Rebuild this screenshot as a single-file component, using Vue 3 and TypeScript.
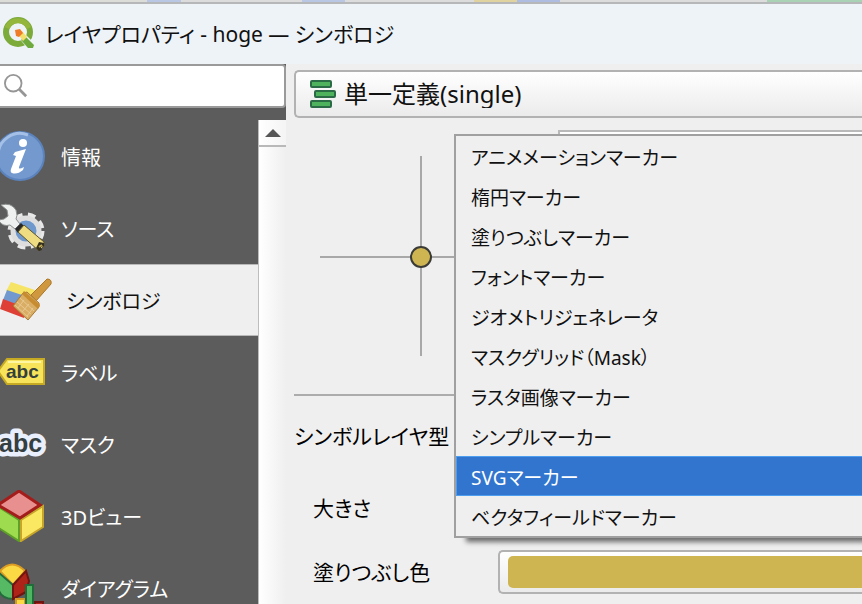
<script setup lang="ts">
import { ref } from 'vue'

interface Page {
  id: string
  label: string
}

const pages: Page[] = [
  { id: 'info', label: '情報' },
  { id: 'source', label: 'ソース' },
  { id: 'symbology', label: 'シンボロジ' },
  { id: 'labels', label: 'ラベル' },
  { id: 'mask', label: 'マスク' },
  { id: 'view3d', label: '3Dビュー' },
  { id: 'diagram', label: 'ダイアグラム' },
]

const layerTypes: string[] = [
  'アニメメーションマーカー',
  '楕円マーカー',
  '塗りつぶしマーカー',
  'フォントマーカー',
  'ジオメトリジェネレータ',
  'マスクグリッド（Mask）',
  'ラスタ画像マーカー',
  'シンプルマーカー',
  'SVGマーカー',
  'ベクタフィールドマーカー',
]

const currentPage = ref<string>('symbology')
const currentType = ref<string>('SVGマーカー')
const query = ref<string>('')
const renderer = ref<string>('single')
</script>

<template>
  <div class="window">
    <div class="canvas-edge" aria-hidden="true"></div>

    <header class="titlebar">
      <svg class="logo" viewBox="0 0 34 34" aria-hidden="true">
        <circle cx="16" cy="15" r="12" fill="none" stroke="#7cab3a" stroke-width="6" />
        <path d="M5 11a12 12 0 0 1 22 0" fill="none" stroke="#94b63c" stroke-width="5" />
        <path d="M15 19l5-5 13 13-6 6z" fill="#eef3f8" />
        <path d="M23 19l9 9-1 3h-5l-7-8z" fill="#6faa3c" />
        <path d="M16 17l4-3 5 6-4 4z" fill="#f3e06b" />
        <path d="M13 13l5-1 3 4-4 4-3-1z" fill="#ee7c28" />
      </svg>
      <h1 class="title">レイヤプロパティ - hoge — シンボロジ</h1>
    </header>

    <div class="body">
      <aside class="sidebar">
        <label class="search">
          <svg class="search-icon" viewBox="0 0 26 26" aria-hidden="true">
            <circle cx="10" cy="10" r="9" fill="none" stroke="#969696" stroke-width="2" />
            <path d="M16 16l8 8" stroke="#969696" stroke-width="3" />
          </svg>
          <input v-model="query" type="text" aria-label="search" />
        </label>

        <div class="list-area">
          <nav class="pages">
            <button
              v-for="page in pages"
              :key="page.id"
              type="button"
              class="page"
              :class="{ active: page.id === currentPage }"
              @click="currentPage = page.id"
            >
              <svg v-if="page.id === 'info'" class="page-icon" viewBox="0 0 52 52" aria-hidden="true">
                <circle cx="20" cy="26" r="24" fill="#7399ce" stroke="#5b83bd" stroke-width="2" />
                <path d="M-2 25A22 22 0 0 1 28 5" fill="none" stroke="#a5c0e6" stroke-width="3" />
                <circle cx="23" cy="13" r="4" fill="#fff" />
                <path d="M15 22l11-3-7 18q-1 3 5 0l-1 3q-6 5-11 3-2-1-1-4l5-13-3-1z" fill="#fff" />
              </svg>

              <svg v-else-if="page.id === 'source'" class="page-icon" viewBox="0 0 52 52" aria-hidden="true">
                <circle cx="26" cy="29" r="15" fill="none" stroke="#e8e8e8" stroke-width="7" stroke-dasharray="7 5" />
                <circle cx="26" cy="29" r="13" fill="#6f98cd" stroke="#dedede" stroke-width="5" />
                <path d="M1 3q10-3 15 5 2 6 0 9l4 5-5 5-5-4q-7 2-11-4V18l5-1 4-3-1-6z" fill="#eef1f0" stroke="#8b8f8d" />
                <path d="M15 27l6-6 3 3-6 7z" fill="#292929" />
                <path d="M18 30l6-7 20 17v4l-5 5z" fill="#eddc82" stroke="#5f542c" />
                <path d="M36 46l3-6 5 1v3l-3 1 1 3-3 1z" fill="#352f1d" />
                <path d="M39 45l3-2" stroke="#b9a650" stroke-width="2" />
              </svg>

              <svg v-else-if="page.id === 'symbology'" class="page-icon" viewBox="0 0 52 52" aria-hidden="true">
                <path d="M11 8l24 8-4 9-25-8z" fill="#f6e467" />
                <path d="M7 16l24 8-6 11-22-9z" fill="#7299cf" />
                <path d="M3 25l24 9-3 10-24-9z" fill="#df4035" />
                <path d="M31 21L47 5q5 0 4 5L36 27z" fill="#cf973e" stroke="#ac7726" />
                <path d="M23 19l4-1 12 11v4L28 46 13 32z" fill="#d9ad63" stroke="#a97930" />
                <path d="M20 24l14 13M17 28l14 12M15 31l13 12M18 34l6-8M22 38l7-8M27 42l6-8" stroke="#e8c992" stroke-width="1" />
                <path d="M24 17l16 14-2 4-16-15z" fill="#c88c30" />
              </svg>

              <svg v-else-if="page.id === 'labels'" class="page-icon" viewBox="0 0 52 52" aria-hidden="true">
                <path d="M-2 25L7 13h37v25H7z" fill="#f7e45b" stroke="#c6aa23" stroke-width="2" />
                <path d="M8 16h33" stroke="#fff6a1" stroke-width="2" />
                <text x="6" y="32" font-size="19" font-weight="700" fill="#35413c">abc</text>
              </svg>

              <svg v-else-if="page.id === 'mask'" class="page-icon" viewBox="0 0 52 52" aria-hidden="true">
                <text
                  x="-1"
                  y="34"
                  font-size="25"
                  font-weight="700"
                  fill="#353f42"
                  stroke="#e9effc"
                  stroke-width="9"
                  stroke-linejoin="round"
                  paint-order="stroke"
                >abc</text>
              </svg>

              <svg v-else-if="page.id === 'view3d'" class="page-icon" viewBox="0 0 52 52" aria-hidden="true">
                <path d="M-3 16l22 14v21L-3 37z" fill="#9edb4e" stroke="#5f9f2a" stroke-width="2" />
                <path d="M43 16L21 30v21l22-14z" fill="#fae862" stroke="#c6a529" stroke-width="2" />
                <path d="M19 1l21 14-20 13L-2 15z" fill="#e88f8f" stroke="#a31d1b" stroke-width="3" />
              </svg>

              <svg v-else class="page-icon" viewBox="0 0 52 52" aria-hidden="true">
                <path d="M0 9q12-13 25 0L13 23z" fill="#fbd944" stroke="#dc9c24" stroke-width="2" />
                <path d="M-2 10l15 13v14Q-2 36-2 23z" fill="#56b964" stroke="#246b3c" stroke-width="2" />
                <path d="M26 9l-13 14v14l13-7 3-11z" fill="#af2418" stroke="#701511" stroke-width="2" />
                <path d="M16 37h9v15h-9z" fill="#fbd944" stroke="#d69825" stroke-width="2" />
                <path d="M26 23h7v29h-7z" fill="#4eb561" stroke="#216a3a" stroke-width="2" />
                <path d="M35 40h8v12h-8z" fill="#af2418" stroke="#701511" stroke-width="2" />
              </svg>
              <span>{{ page.label }}</span>
            </button>
          </nav>
          <div class="scrollbar">
            <button type="button" class="scroll-up" aria-label="up">
              <svg viewBox="0 0 16 8" aria-hidden="true"><path d="M0 8l8-8 8 8z" fill="#565656" /></svg>
            </button>
          </div>
        </div>
      </aside>

      <main class="main">
        <div class="renderer">
          <svg class="renderer-icon" viewBox="0 0 26 28" aria-hidden="true">
            <g fill="#4fb35e" stroke="#2b6b45" stroke-width="2">
              <rect x="1" y="1" width="20" height="6" rx="1" />
              <rect x="5" y="11" width="20" height="6" rx="1" />
              <rect x="1" y="21" width="20" height="6" rx="1" />
            </g>
          </svg>
          <select v-model="renderer" aria-label="renderer">
            <option value="single">単一定義(single)</option>
          </select>
        </div>

        <section class="symbol">
          <svg class="preview" viewBox="0 0 200 200" aria-hidden="true">
            <path d="M0 101h200M101 0v200" stroke="#a8a8a8" stroke-width="2" />
            <circle cx="101" cy="101" r="10" fill="#ceb552" stroke="#3a3a36" stroke-width="2" />
          </svg>
          <div class="layer-tree"></div>
        </section>

        <form class="properties" @submit.prevent>
          <div class="row type-row"><span id="type-label">シンボルレイヤ型</span></div>
          <div class="row"><span>大きさ</span></div>
          <div class="row">
            <label for="fill-color">塗りつぶし色</label>
            <button id="fill-color" type="button" class="color-button">
              <span class="swatch"></span>
            </button>
          </div>
        </form>

        <div class="menu" role="listbox" aria-labelledby="type-label">
          <button
            v-for="name in layerTypes"
            :key="name"
            type="button"
            role="option"
            class="option"
            :class="{ selected: name === currentType }"
            :aria-selected="name === currentType"
            @click="currentType = name"
          >
            {{ name }}
          </button>
        </div>
      </main>
    </div>
  </div>
</template>

<style>
body {
  background: #efefef;
  overflow: hidden;
}
</style>

<style scoped>
.window {
  display: flex;
  flex-direction: column;
  height: 100vh;
  overflow: hidden;
  color: #111;
  background: #efefef;
  font-family: 'Noto Sans', 'Noto Sans CJK JP', sans-serif;
  font-feature-settings: 'palt';
  font-size: 20px;
  line-height: 28px;
}

.window *,
.window {
  box-sizing: border-box;
}

button,
select,
input {
  margin: 0;
  padding: 0;
  border: 0;
  color: inherit;
  font: inherit;
  font-feature-settings: inherit;
}

.canvas-edge {
  flex: none;
  height: 4px;
  border-bottom: 2px solid #b5b7b8;
  background: linear-gradient(90deg, #dcdcd8 0 17%, #bac7e4 17% 21%, #dcdcdc 21% 35%, #bac7e4 35% 40%, #dcdcdc 40% 55%, #e0d3a0 55% 60%, #afbce2 60% 65%, #dcdcdc 65% 89%, #a9d2b5 89%);
}

.titlebar {
  display: flex;
  flex: none;
  align-items: center;
  gap: 9px;
  height: 60px;
  padding-left: 2px;
  background: #eef3f8;
}

.logo {
  width: 34px;
  height: 34px;
}

.title {
  margin: 0;
  font-size: 21px;
  line-height: 28px;
  font-weight: 400;
}

.body {
  display: flex;
  flex: 1;
  min-height: 0;
}

.sidebar {
  display: flex;
  flex: none;
  flex-direction: column;
  width: 286px;
  background: #5c5c5c;
}

.search {
  display: flex;
  flex: none;
  align-items: center;
  gap: 8px;
  height: 44px;
  padding-left: 4px;
  border: 2px solid #9a9a9a;
  border-left: 0;
  border-radius: 0 4px 4px 0;
  background: #fff;
}

.search-icon {
  width: 24px;
  height: 24px;
}

.search input {
  flex: 1;
  min-width: 0;
  outline: 0;
  background: transparent;
}

.list-area {
  display: flex;
  flex: 1;
  min-height: 0;
  padding-top: 12px;
}

.pages {
  flex: 1;
  overflow: hidden;
}

.page {
  display: flex;
  align-items: center;
  gap: 9px;
  width: 100%;
  height: 72px;
  background: transparent;
  color: #fff;
  text-align: left;
}

.page span {
  padding-top: 3px;
}

.page.active {
  gap: 14px;
  border-top: 1px solid #b9b9b9;
  border-bottom: 1px solid #b9b9b9;
  background: #efefef;
  color: #111;
}

.page-icon {
  flex: none;
  width: 52px;
  height: 52px;
  font-family: 'Liberation Sans', sans-serif;
}

.scrollbar {
  flex: none;
  width: 28px;
  border-left: 1px solid #bdbdbd;
  background: linear-gradient(90deg, #fff, #efefef);
}

.scroll-up {
  display: flex;
  align-items: center;
  justify-content: center;
  width: 100%;
  height: 27px;
  border-bottom: 2px solid #b9b9b9;
  background: linear-gradient(90deg, #fff, #f4f4f4);
}

.scroll-up svg {
  width: 16px;
  height: 8px;
}

.main {
  position: relative;
  display: flex;
  flex: 1;
  flex-direction: column;
  min-width: 0;
  padding: 6px 0 0 8px;
}

.renderer {
  display: flex;
  flex: none;
  align-items: center;
  gap: 8px;
  height: 48px;
  padding-left: 14px;
  border: 2px solid #b2b2b2;
  border-right: 0;
  border-radius: 5px 0 0 5px;
  background: linear-gradient(#fff, #ebebeb);
}

.renderer-icon {
  width: 26px;
  height: 28px;
}

.renderer select {
  flex: 1;
  height: 40px;
  appearance: none;
  background: transparent;
  font-size: 24px;
}

.symbol {
  display: flex;
  flex: none;
  gap: 38px;
  height: 278px;
  padding: 12px 0 0 26px;
  border-bottom: 2px solid #acacac;
}

.preview {
  flex: none;
  width: 200px;
  height: 200px;
  margin-top: 26px;
}

.layer-tree {
  flex: 1;
  height: 240px;
  border: 2px solid #b9b9b9;
  border-right: 0;
  background: #fff;
}

.properties {
  color: #000;
  font-size: 21px;
}

.row {
  display: flex;
  align-items: center;
  height: 64px;
  padding-left: 19px;
}

.type-row {
  height: 80px;
  padding-left: 0;
}

.row label {
  width: 185px;
}

.color-button {
  flex: 1;
  height: 44px;
  padding: 4px 0 4px 8px;
  border: 2px solid #b2b2b2;
  border-right: 0;
  border-radius: 5px 0 0 5px;
  background: linear-gradient(#fff, #ebebeb);
}

.swatch {
  display: block;
  height: 32px;
  border-radius: 5px 0 0 5px;
  background: #ceb552;
}

.menu {
  position: absolute;
  top: 70px;
  right: 0;
  left: 168px;
  border: 2px solid #a0a0a0;
  border-right: 0;
  background: #efefef;
  box-shadow: 10px 6px 5px -2px rgb(0 0 0 / 55%);
  font-size: 19px;
}

.option {
  display: block;
  width: 100%;
  height: 40px;
  padding: 3px 0 0 14px;
  border: solid transparent;
  border-width: 1px 0 1px 1px;
  background: transparent;
  text-align: left;
}

.option.selected {
  border-color: #4d9df0;
  background: #3275cf;
  color: #fff;
}
</style>
